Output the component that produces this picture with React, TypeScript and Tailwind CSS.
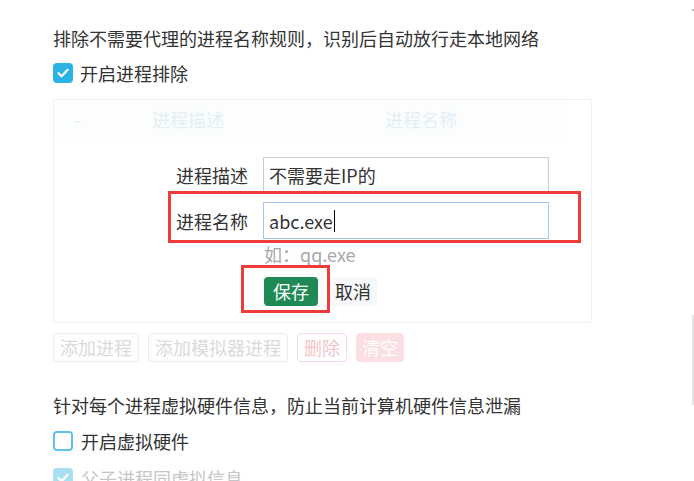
import React from 'react';

const FONT = { fontFamily: '"Microsoft YaHei", "Noto Sans CJK SC", "Noto Sans", sans-serif' };

function Check({ checked, faded }: { checked: boolean; faded?: boolean }) {
  if (!checked) {
    return <span className="h-[20px] w-[20px] shrink-0 rounded-[4px] border-2 border-[#5fc2ec] bg-white" />;
  }
  return (
    <span
      className={`flex h-[20px] w-[20px] shrink-0 items-center justify-center rounded-[4px] ${
        faded ? 'bg-[#a9dff3]' : 'bg-[#2bb3e6]'
      }`}
    >
      <svg width="14" height="14" viewBox="0 0 14 14" fill="none">
        <path d="M2.5 7.2 5.6 10.2 11.6 3.8" stroke="white" strokeWidth="2.2" strokeLinecap="round" strokeLinejoin="round" />
      </svg>
    </span>
  );
}

export default function App() {
  return (
    <div className="relative h-[481px] w-[694px] overflow-hidden bg-white text-[18px] text-[#333]" style={FONT}>
      <div className="pl-[53px] pt-[25px]">
        <p className="leading-[26px]">排除不需要代理的进程名称规则，识别后自动放行走本地网络</p>

        <label className="mt-[9px] flex h-[26px] items-center gap-[7px]">
          <Check checked />
          <span className="leading-[26px]">开启进程排除</span>
        </label>

        {/* process table with the edit form on top */}
        <div className="mt-[13px] w-[539px] border border-[#f1f2f3] pb-[16px]">
          <div className="flex h-[38px] w-[512px] items-center bg-[#fcfdfd] text-[#e2f0f6]">
            <span className="w-[98px] pl-[20px]">-</span>
            <span className="w-[233px]">进程描述</span>
            <span>进程名称</span>
          </div>

          <div className="mt-[19px] pl-[122px]">
            <div className="flex items-center gap-[15px]">
              <span className="w-[72px] text-right leading-[26px]">进程描述</span>
              <div className="flex h-[36px] w-[286px] items-center border border-[#cbccd3] px-[5px] leading-[26px]">
                不需要走IP的
              </div>
            </div>
            <div className="mt-[9px] flex items-center gap-[15px]">
              <span className="w-[72px] text-right leading-[26px]">进程名称</span>
              <div className="flex h-[37px] w-[286px] items-center border border-[#9fc8f1] px-[5px] leading-[26px]">
                abc.exe
                <span className="ml-[1px] h-[22px] w-[1.5px] bg-black" />
              </div>
            </div>
            <p className="mt-[4px] pl-[88px] leading-[22px] text-[#a8a8a8]">如：qq.exe</p>
            <div className="mt-[12px] flex items-center gap-[11px] pl-[88px]">
              <button className="h-[29px] rounded-[4px] bg-[#1f8a55] px-[9px] leading-[29px] text-white">保存</button>
              <button className="h-[29px] rounded-[4px] bg-[#f7f8fa] px-[6px] leading-[29px] text-[#333]">取消</button>
            </div>
          </div>
        </div>

        <div className="mt-[10px] flex gap-[9px] text-[18px]">
          <button className="h-[29px] rounded-[4px] border border-[#ececec] px-[6px] leading-[27px] text-[#dadada]">添加进程</button>
          <button className="h-[29px] rounded-[4px] border border-[#ececec] px-[6px] leading-[27px] text-[#dadada]">添加模拟器进程</button>
          <button className="h-[29px] rounded-[4px] border border-[#f9d9dc] px-[6px] leading-[27px] text-[#f6c4c8]">删除</button>
          <button className="h-[29px] rounded-[4px] bg-[#fbdfe2] px-[6px] leading-[29px] text-white">清空</button>
        </div>

        <p className="mt-[30px] leading-[26px]">针对每个进程虚拟硬件信息，防止当前计算机硬件信息泄漏</p>

        <label className="mt-[10px] flex h-[26px] items-center gap-[8px]">
          <Check checked={false} />
          <span className="leading-[26px]">开启虚拟硬件</span>
        </label>

        <label className="mt-[11px] flex h-[26px] items-center gap-[8px]">
          <Check checked faded />
          <span className="leading-[26px] text-[#c6c6c6]">父子进程同虚拟信息</span>
        </label>
      </div>

      {/* red annotation boxes */}
      <div className="absolute left-[168px] top-[191px] h-[52px] w-[413px] border-[3px] border-[#f03b3b]" />
      <div className="absolute left-[241px] top-[265px] h-[48px] w-[89px] border-[3px] border-[#f03b3b]" />

      {/* scrollbar sliver and corner dot */}
      <div className="absolute right-0 top-[315px] h-[90px] w-[2px] bg-[#e4e4e4]" />
      <div className="absolute right-0 top-[9px] h-[2px] w-[2px] bg-[#b8b8b8]" />
    </div>
  );
}
